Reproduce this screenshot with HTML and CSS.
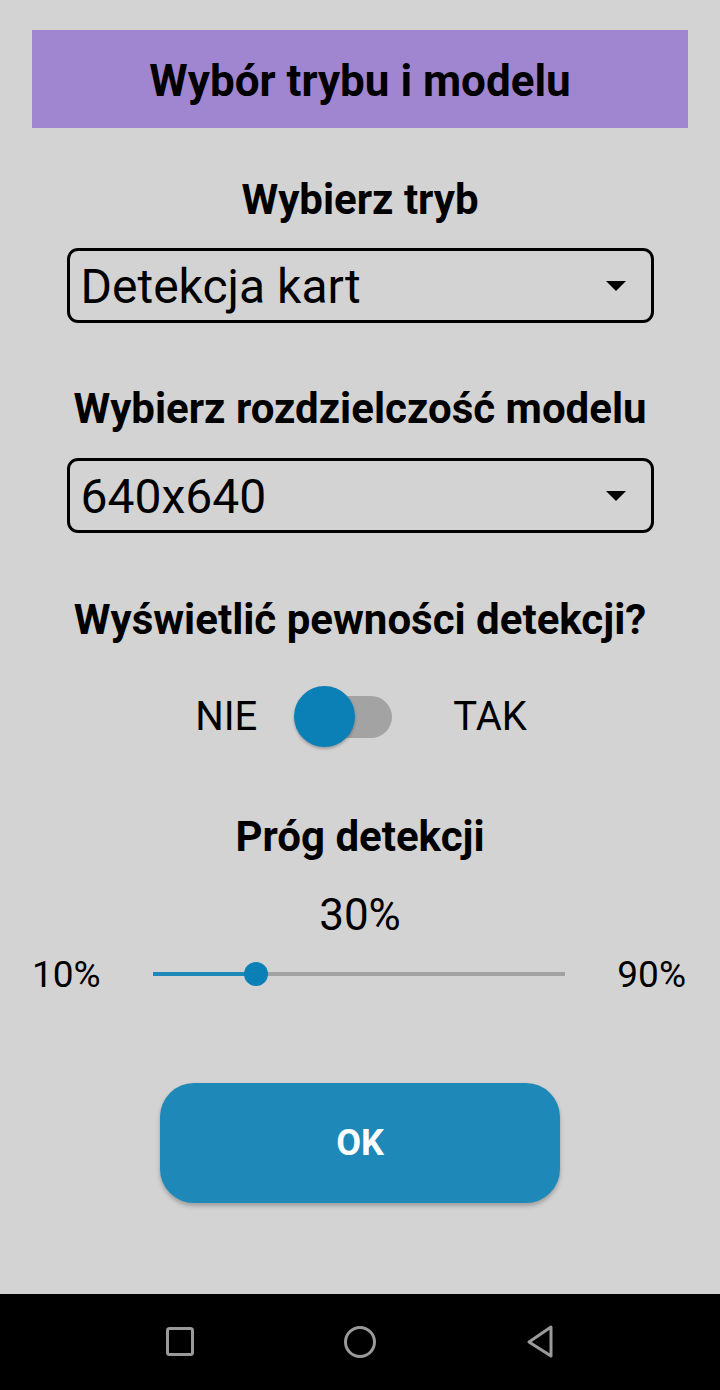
FILE: index.html
```html
<!DOCTYPE html>
<html lang="pl">
<head>
<meta charset="utf-8">
<title>Wybór trybu i modelu</title>
<link rel="stylesheet" href="styles.css">
</head>
<body>
<div class="screen">
  <main class="content">
    <header class="title-bar"><h1 class="title">Wybór trybu i modelu</h1></header>

    <h2 class="label label-mode">Wybierz tryb</h2>
    <div class="select select-mode">
      <span class="select-text">Detekcja kart</span>
      <svg class="select-arrow" width="20" height="10" viewBox="0 0 20 10"><polygon points="0,0 20,0 10,10" fill="#000"/></svg>
    </div>

    <h2 class="label label-res">Wybierz rozdzielczość modelu</h2>
    <div class="select select-res">
      <span class="select-text">640x640</span>
      <svg class="select-arrow" width="20" height="10" viewBox="0 0 20 10"><polygon points="0,0 20,0 10,10" fill="#000"/></svg>
    </div>

    <h2 class="label label-conf">Wyświetlić pewności detekcji?</h2>
    <div class="switch-row">
      <span class="switch-text">NIE</span>
      <div class="switch">
        <div class="switch-track"></div>
        <div class="switch-thumb"></div>
      </div>
      <span class="switch-text">TAK</span>
    </div>

    <h2 class="label label-thr">Próg detekcji</h2>
    <div class="value">30%</div>
    <div class="slider-row">
      <span class="slider-text">10%</span>
      <div class="slider">
        <div class="slider-fill" style="width: 25%"></div>
        <div class="slider-rest"></div>
        <div class="slider-thumb" style="left: 25%"></div>
      </div>
      <span class="slider-text">90%</span>
    </div>

    <button class="ok-btn">OK</button>
  </main>
  <nav class="navbar">
    <svg class="nav-icon" width="30" height="32" viewBox="0 0 30 32"><rect x="2.5" y="2.5" width="25" height="26" rx="2" fill="none" stroke="#9a9a9a" stroke-width="3"/></svg>
    <svg class="nav-icon" width="34" height="34" viewBox="0 0 34 34"><ellipse cx="17" cy="17" rx="14.5" ry="14.5" fill="none" stroke="#9a9a9a" stroke-width="3"/></svg>
    <svg class="nav-icon" width="30" height="34" viewBox="0 0 30 34"><polygon points="26,2 26,31 4,17" fill="none" stroke="#9a9a9a" stroke-width="3" stroke-linejoin="round"/></svg>
  </nav>
</div>
</body>
</html>
```

FILE: styles.css
```css
* { box-sizing: border-box; }
html, body { margin: 0; padding: 0; }
body {
  background: #d3d3d3;
  font-family: Roboto, "Liberation Sans", sans-serif;
  color: #000;
}
.screen {
  width: 720px;
  height: 1390px;
  display: flex;
  flex-direction: column;
}
.content {
  flex: 1;
  display: flex;
  flex-direction: column;
  align-items: center;
  padding-top: 30px;
}
.title-bar {
  width: 656px;
  height: 98px;
  background: #a086d0;
  display: flex;
  align-items: center;
  justify-content: center;
  padding-top: 4px;
}
.title {
  margin: 0;
  font-size: 44px;
  font-weight: 700;
  line-height: 1;
}
.label {
  margin: 0;
  font-size: 42px;
  font-weight: 700;
  line-height: 50px;
  height: 50px;
  text-align: center;
}
.label-mode { margin-top: 47px; }
.label-res { margin-top: 61px; }
.label-conf { margin-top: 62px; }
.label-thr { margin-top: 65px; }

.select {
  width: 587px;
  height: 75px;
  border: 3px solid #000;
  border-radius: 11px;
  display: flex;
  align-items: center;
  justify-content: space-between;
  padding: 0 25px 0 11px;
}
.select-mode { margin-top: 23px; }
.select-res { margin-top: 24px; }
.select-text {
  font-size: 48px;
  line-height: 1;
  padding-top: 2px;
}
.select-arrow { display: block; }

.switch-row {
  margin-top: 42px;
  height: 60px;
  display: flex;
  align-items: center;
  padding-left: 2px;
}
.switch-text {
  font-size: 40px;
  line-height: 1;
}
.switch {
  position: relative;
  width: 98px;
  height: 62px;
  margin: 0 61px 0 37px;
  display: flex;
  align-items: center;
  justify-content: flex-end;
}
.switch-track {
  width: 92px;
  height: 42px;
  border-radius: 21px;
  background: #a3a3a3;
}
.switch-thumb {
  position: absolute;
  left: 0;
  top: 0;
  width: 61px;
  height: 61px;
  border-radius: 50%;
  background: #0a80b6;
  box-shadow: 0 2px 3px rgba(0,0,0,0.25);
}

.value {
  margin-top: 28px;
  font-size: 44px;
  line-height: 50px;
}
.slider-row {
  margin-top: 14px;
  width: 720px;
  height: 40px;
  display: flex;
  align-items: center;
  justify-content: space-between;
  padding: 0 34px 0 32px;
}
.slider-text {
  font-size: 37px;
  line-height: 1;
}
.slider {
  position: relative;
  width: 412px;
  height: 24px;
  display: flex;
  align-items: center;
}
.slider-fill {
  height: 4px;
  background: #1e88b8;
}
.slider-rest {
  flex: 1;
  height: 4px;
  background: #a2a2a2;
}
.slider-thumb {
  position: absolute;
  top: 0;
  width: 24px;
  height: 24px;
  margin-left: -12px;
  border-radius: 50%;
  background: #0a80b6;
}

.ok-btn {
  margin-top: 89px;
  width: 400px;
  height: 120px;
  border: 0;
  border-radius: 34px;
  background: #1e89b9;
  color: #fff;
  font-family: Roboto, "Liberation Sans", sans-serif;
  font-size: 36px;
  font-weight: 700;
  box-shadow: 0 3px 4px rgba(0,0,0,0.25);
}

.navbar {
  height: 96px;
  background: #000;
  display: flex;
  align-items: center;
  justify-content: center;
  gap: 148px;
}
.nav-icon { display: block; }
```
